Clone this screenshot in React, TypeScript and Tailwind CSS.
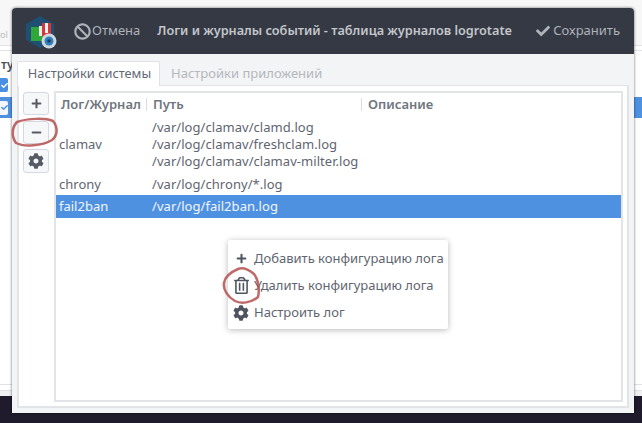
import { FaBan, FaCheck, FaCog, FaMinus, FaPlus, FaRegTrashAlt } from 'react-icons/fa';

const rows = [
  { name: 'clamav', paths: ['/var/log/clamav/clamd.log', '/var/log/clamav/freshclam.log', '/var/log/clamav/clamav-milter.log'], cls: 'h-[57px]' },
  { name: 'chrony', paths: ['/var/log/chrony/*.log'], cls: 'h-[21px] mt-px' },
  { name: 'fail2ban', paths: ['/var/log/fail2ban.log'], cls: 'h-[23px] bg-[#4f91e1] text-[#f2f6fc]' },
];

function Logo() {
  return (
    <svg width="32" height="34" viewBox="0 0 32 34" className="shrink-0">
      <path d="M14 0 L28 8 L28 24 L14 32 L0 24 L0 8 Z" fill="#1f4f73" />
      <rect x="5" y="11" width="14" height="14" fill="#2fa83a" />
      <rect x="13" y="10" width="3" height="10" fill="#e8f0e8" />
      <rect x="16" y="7" width="9" height="13" fill="#d9363a" />
      <rect x="19" y="7" width="3" height="10" fill="#f5f5f5" />
      <circle cx="23" cy="25" r="7.5" fill="#cfd8de" />
      <circle cx="23" cy="25" r="4.5" fill="#2f7fc1" />
      <circle cx="23" cy="25" r="1.8" fill="#1c3f5c" />
    </svg>
  );
}

function ToolButton({ children, cls }: { children: React.ReactNode; cls: string }) {
  return (
    <div className={`flex w-[26px] items-center justify-center rounded-[3px] border border-[#d5d8e3] bg-[#f6f7f9] text-[#555a64] ${cls}`}>
      {children}
    </div>
  );
}

function MenuItem({ icon, label }: { icon: React.ReactNode; label: string }) {
  return (
    <div className="flex h-[27px] items-center">
      <div className="flex w-[26px] justify-center text-[#4f5560]">{icon}</div>
      <span>{label}</span>
    </div>
  );
}

function DesktopCheck({ inverted }: { inverted?: boolean }) {
  return (
    <span className={`flex h-[14px] w-[8px] items-center justify-end rounded-r-[2px] ${inverted ? 'bg-[#f3f7fd] text-[#4a90e2]' : 'bg-[#4a90e2] text-white'}`}>
      <FaCheck size={7} />
    </span>
  );
}

export default function App() {
  return (
    <div className="relative h-[423px] w-[642px] overflow-hidden bg-white font-['Noto_Sans',sans-serif] text-[13px] text-[#5f6570]">
      {/* desktop behind the window */}
      <div className="flex h-[396px] flex-col">
        <div className="flex h-[45px] items-end bg-[#f7f7f7] pb-[6px] text-[9px] leading-none text-[#b9bbc0]">ol</div>
        <div className="h-[6px] border-y border-[#e2e2e6] bg-white" />
        <div className="flex h-[27px] items-center bg-white pl-px text-[12px] font-semibold leading-none text-[#4b4f57]">ту</div>
        <div className="flex h-[19px] items-start bg-white">
          <DesktopCheck />
        </div>
        <div className="flex h-[21px] items-center bg-[#4f91e1]">
          <DesktopCheck inverted />
        </div>
        <div className="flex-1 bg-white" />
        <div className="h-[6px] border-t border-[#e2e2e6] bg-white" />
        <div className="h-[6px] border-t border-[#e2e2e6] bg-[#f1f1f3]" />
      </div>
      <div className="h-[27px] bg-[#1f1b2d]" />

      {/* dialog window */}
      <div className="absolute left-[12px] top-[8px] flex h-[405px] w-[622px] flex-col rounded-t-[4px] bg-[#f3f4f6] shadow-[0_0_3px_rgba(0,0,0,0.6)]">
        <header className="flex h-[46px] shrink-0 items-center whitespace-nowrap rounded-t-[4px] bg-[#343944] text-[#aeb2b9]">
          <div className="ml-[14px] mt-[3px]">
            <Logo />
          </div>
          <div className="ml-[16px] flex items-center">
            <FaBan size={17} className="text-[#aeb2b9]" />
            <span className="ml-[1px]">Отмена</span>
          </div>
          <span className="ml-[17px] text-[12.7px] font-semibold text-[#c4c6cb]">
            Логи и журналы событий - таблица журналов logrotate
          </span>
          <div className="ml-auto mr-[14px] flex items-center">
            <FaCheck size={14} className="mr-[3px] text-[#aeb2b9]" />
            <span>Сохранить</span>
          </div>
        </header>

        <div className="flex flex-1 flex-col px-[5px] pb-[5px] pt-[7px]">
          <div className="relative z-10 -mb-px flex h-[25px]">
            <div className="flex w-[143px] items-center justify-center rounded-t-[2px] border border-b-0 border-[#dfe1e6] bg-white pl-[2px] text-[12.8px] text-[#626873]">
              Настройки системы
            </div>
            <div className="ml-[11px] flex items-center text-[#b4b7bd]">Настройки приложений</div>
          </div>

          <div className="flex flex-1 gap-[4px] border-2 border-t-1 border-[#e2e3e7] bg-white pb-[4px] pl-[4px] pr-[4px] pt-[5px]">
            <div className="flex w-[27px] flex-col pt-px">
              <ToolButton cls="h-[23px]"><FaPlus size={11} /></ToolButton>
              <ToolButton cls="mt-[6px] h-[23px]"><FaMinus size={11} /></ToolButton>
              <ToolButton cls="mt-[5px] h-[24px]"><FaCog size={16} /></ToolButton>
            </div>
            <div className="flex-1 border-2 border-[#e3e4e8] bg-white">
              <div className="flex h-[23px] items-center font-semibold text-[#70757e]">
                <span className="w-[90px] pl-[5px]">Лог/Журнал</span>
                <span className="h-[13px] w-px bg-[#dcdde1]" />
                <span className="w-[214px] pl-[6px]">Путь</span>
                <span className="h-[13px] w-px bg-[#dcdde1]" />
                <span className="pl-[6px]">Описание</span>
              </div>
              {rows.map((row) => (
                <div key={row.name} className={`flex items-center ${row.cls}`}>
                  <span className="w-[90px] pl-[3px]">{row.name}</span>
                  <div className="flex flex-col pl-[6px] leading-[17px] tracking-[0.05px]">
                    {row.paths.map((p) => (
                      <span key={p}>{p}</span>
                    ))}
                  </div>
                </div>
              ))}
            </div>
          </div>
        </div>
      </div>

      {/* context menu */}
      <div className="absolute left-[228px] top-[240px] h-[89px] w-[220px] rounded-[2px] bg-white pt-[5px] shadow-[0_1px_6px_rgba(0,0,0,0.28)]">
        <MenuItem icon={<FaPlus size={11} />} label="Добавить конфигурацию лога" />
        <MenuItem icon={<FaRegTrashAlt size={17} />} label="Удалить конфигурацию лога" />
        <MenuItem icon={<FaCog size={16} />} label="Настроить лог" />
      </div>

      {/* red marker annotations */}
      <svg className="pointer-events-none absolute left-0 top-0" width="642" height="423" fill="none" stroke="#b5504f" strokeWidth="2.5" opacity="0.85">
        <path d="M17 122 C28 118 46 118 53 121 C58 127 58 135 52 140 C42 146 24 147 16 143 C11 136 12 127 17 122 Z" />
        <path d="M238 269 C231 272 225 276 224 283 C223 290 228 297 235 301 C241 304 251 303 258 297 C260 289 258 279 254 274 C249 270 243 267 238 269" />
      </svg>
    </div>
  );
}
